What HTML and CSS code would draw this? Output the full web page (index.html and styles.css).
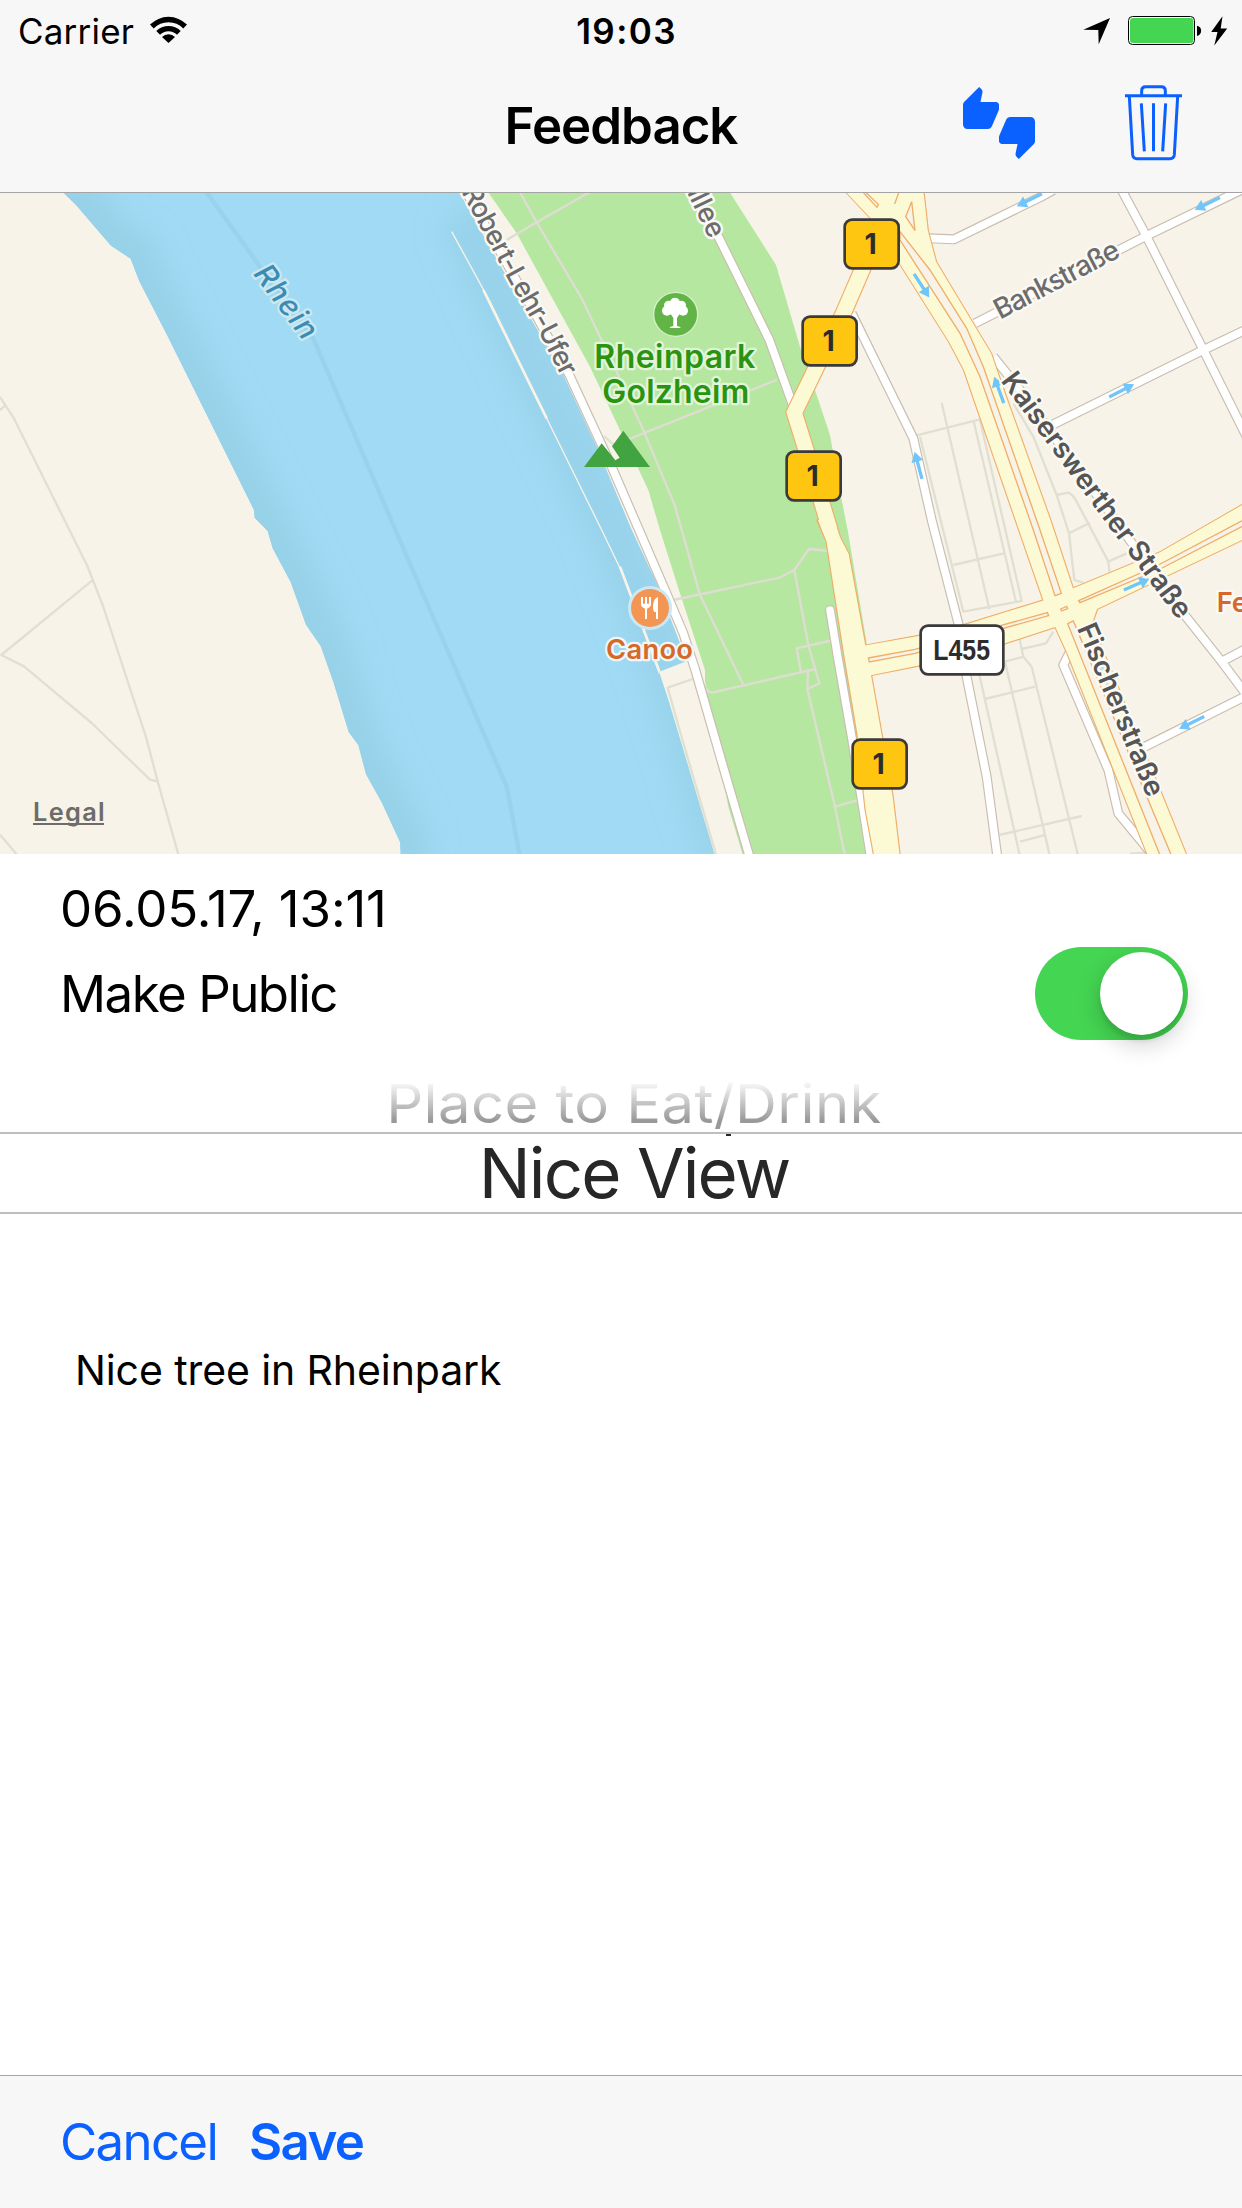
FILE: index.html
```html
<!DOCTYPE html>
<html lang="en">
<head>
<meta charset="utf-8">
<title>Feedback</title>
<link rel="stylesheet" href="styles.css">
</head>
<body>
<div class="screen">
  <header class="top">
    <div class="status">
      <div class="status-left">
        <span class="carrier">Carrier</span>
        <svg class="wifi" viewBox="0 0 37 27" width="37" height="27">
          <path d="M0 8.6A26 26 0 0 1 37 8.6L33.3 12.4A20.8 20.8 0 0 0 3.7 12.4Z"/>
          <path d="M6.3 15A17.2 17.2 0 0 1 30.7 15L27 18.7A12 12 0 0 0 10 18.7Z"/>
          <path d="M12 21A9 9 0 0 1 25 21L18.500 27Z"/>
        </svg>
      </div>
      <span class="clock">19:03</span>
      <div class="status-right">
        <svg class="locate" viewBox="1083 17 28 28" width="28" height="28"><path d="M1083.300 29.700L1110 18L1098.700 44.300L1098.300 30Z"/></svg>
        <svg class="battery" viewBox="1128 16 74 29" width="74" height="29">
          <rect x="1128.500" y="16.500" width="66" height="28" rx="4" fill="#fff" stroke="#000"/>
          <rect x="1130" y="18" width="63.500" height="25" rx="3" fill="#44d552"/>
          <path d="M1197 25.700C1202.500 26.500 1202.500 35 1197 36Z"/>
        </svg>
        <svg class="bolt" viewBox="1211 15 17 30" width="17" height="30"><path d="M1222.500 15.300L1211.200 31H1217.500L1214.300 44.400L1227.200 27.600H1220.700Z"/></svg>
      </div>
    </div>
    <div class="nav">
      <h1 class="title">Feedback</h1>
      <div class="actions">
        <svg class="thumbs" viewBox="0 0 24 24" width="72" height="72"><path d="M12 6c0-.55-.45-1-1-1H5.820l.66-3.180.02-.23c0-.31-.13-.59-.33-.8L5.380 0 .44 4.940C.17 5.210 0 5.590 0 6v6.500c0 .83.67 1.500 1.500 1.500h6.750c.62 0 1.150-.38 1.380-.91l2.260-5.290c.07-.17.11-.36.11-.55V6zm10.500 4h-6.750c-.62 0-1.150.38-1.380.91l-2.260 5.290c-.07.17-.11.36-.11.55V18c0 .55.45 1 1 1h5.180l-.66 3.180-.02.24c0 .31.13.59.33.8l.79.78 4.940-4.940c.27-.27.44-.65.44-1.060v-6.500c0-.83-.67-1.500-1.500-1.500z"/></svg>
        <svg class="trash" viewBox="675 254 171 228" width="57" height="76">
          <path d="M675 286H846M725 286V271Q725 259 737 259H784Q796 259 796 271V286M688 288L698 463Q699 475 711 475H810Q822 475 823 463L833 288M724 309L733 453M760.500 309V453M797 309L788 453"/>
        </svg>
      </div>
    </div>
  </header>

  <svg class="map" viewBox="0 9 3726 1983" width="1242" height="661">
    <defs>
      <path id="water" d="M190 8L228 45L333 167L392 206L418 274L500 433L600 634L762 960L764 983L803 1023L818 1075L872 1176L918 1304L962 1368L1000 1475L1046 1626L1075 1665L1098 1753L1145 1837L1200 1956L1203 2010H2148L2143 1991L2050 1680L2005 1530L1977 1445L2055 1415L2040 1360L1970 1180L1895 1020L1790 770L1690 555L1500 225L1378 8Z"/>
      <clipPath id="shore"><use href="#water"/></clipPath>
      <filter id="soft" x="-20%" y="-20%" width="140%" height="140%"><feGaussianBlur stdDeviation="42"/></filter>
      <path id="arrow" d="M-42 -5H12V-18L42 0L12 18V5H-42Z"/>
      <path id="ufer" d="M1384 5L1528 275L1621 435L1690 572"/>
      <path id="allee" d="M2036 -50L2064 14L2129 149"/>
    </defs>
    <rect y="0" width="3726" height="2000" fill="#f7f3e8"/>
    <use href="#water" fill="#a0daf4"/>
    <g clip-path="url(#shore)" fill="none">
      <g stroke="#96d1e8" filter="url(#soft)">
        <path stroke-width="170" d="M150 -40L228 45L333 167L392 206L418 274L600 634L762 960L818 1075L872 1176L962 1368L1046 1626L1098 1753L1200 1956L1210 2040"/>
        <path stroke-width="110" stroke-opacity=".8" d="M1370 90L1480 335L1650 685L1815 1020L1987 1445L2060 1680L2160 2020"/>
        <path stroke-width="90" stroke-opacity=".6" d="M1390 30L1690 555L1895 1020L2055 1400"/>
      </g>
      <path stroke="#98d2ec" stroke-width="13" d="M615 0L780 230L940 446L1225 1110L1520 1790L1560 2000"/>
      <path stroke="#f7f3e8" stroke-width="4" d="M1355 125L1470 335L1640 685L1805 1020L1870 1155L1977 1445"/>
      <path stroke="#f7f3e8" stroke-width="8" d="M1860 1130L1980 1450M1450 300L1640 685"/>
    </g>
    <path fill="#b6e7a0" d="M1460 0L1550 130L1770 530L1945 900L1980 1020L2035 1195L2115 1440L2115 1475L2185 1850L2230 2000H2610L2600 1360L2543 1020L2525 930L2490 735L2445 600L2400 470L2328 225L2185 0Z"/>

    <g class="path">
      <path d="M0 621L40 682L262 1128L308 1245L438 1641L473 1774L540 2011M277 1171L4 1395L72 1429L275 1599L450 1769L473 1774M0 660L15 647M0 1934L50 1993"/>
      <path d="M2078 1467L2003 1493L2040 1625L2150 2000M1812 738L1845 768"/>
    </g>
    <g class="path parkway">
      <path d="M1556 0L1610 97L1745 325L1850 545L1934 730L2022 940L2045 1020L2100 1215L2230 1485M1780 0L1610 97L1520 150M1885 748L2330 570"/>
      <path d="M2020 1230L2338 1163L2383 1140L2427 1077L2490 1083M2383 1140L2425 1365L2458 1480L2422 1497L2424 1445M2422 1497L2505 1850L2535 2000M2505 1850L2590 1826M2115 1490Q2125 1512 2145 1506L2445 1437M2403 1445L2390 1375L2500 1350"/>
    </g>
    <g class="path" transform="translate(2400 0)">
      <path d="M350 736L540 688M425 638L568 1258M360 740L490 1265L665 1233L540 690M520 690L648 1235M460 1125L612 1090M640 640L700 740L770 915L807 1030L823 1170L850 1178M770 915L805 908Q820 915 830 935L925 1115L928 1145M807 1030L870 998M925 1115L980 1090"/>
      <path d="M535 1440L660 2000M615 1415L750 2000M655 1330L670 1400L695 1430L835 2000M555 1527L705 1490M615 1415L670 1400M665 1377L738 1360L760 1325M598 1935L845 1878M660 1955L735 1935M990 1991L1040 1987"/>
    </g>

    <g class="road-edge">
      <path d="M1395 0L1540 255L1708 555L1835 830L1917 1020L1995 1200L2050 1330L2086 1440L2168 1725L2250 2005"/>
      <path d="M2082 0L2160 150L2308 450L2382 655"/>
      <path d="M2555 370L2740 745L2795 990L2875 1300L2900 1460L2960 1760L2992 2000"/>
      <path d="M2785 145L2862 148L3120 22L3160 0M2925 400L3435 140L3740 -8M3365 0L3440 140L3610 480L3740 740M3150 708L3610 480L3740 418"/>
      <path d="M2980 500L3060 600L3550 1270L3665 1415L3740 1515M3665 1415L3740 1375M3425 1675L3740 1517"/>
      <path d="M3210 1385L3190 1425L3325 1740L3355 1870L3450 1985"/>
      <path d="M2490 1260L2513 1400L2555 1640L2590 1860L2612 2000" stroke-linecap="round"/>
    </g>
    <g class="road-fill">
      <path d="M1395 0L1540 255L1708 555L1835 830L1917 1020L1995 1200L2050 1330L2086 1440L2168 1725L2250 2005"/>
      <path d="M2082 0L2160 150L2308 450L2382 655"/>
      <path d="M2555 370L2740 745L2795 990L2875 1300L2900 1460L2960 1760L2992 2000"/>
      <path d="M2785 145L2862 148L3120 22L3160 0M2925 400L3435 140L3740 -8M3365 0L3440 140L3610 480L3740 740M3150 708L3610 480L3740 418"/>
      <path d="M2980 500L3060 600L3550 1270L3665 1415L3740 1515M3665 1415L3740 1375M3425 1675L3740 1517"/>
      <path d="M3210 1385L3190 1425L3325 1740L3355 1870L3450 1985"/>
      <path d="M2490 1260L2513 1400L2555 1640L2590 1860L2612 2000" stroke-linecap="round"/>
    </g>

    <g class="main-edge">
      <path d="M2690 0L2530 370L2450 530L2383 668L2418 780L2490 1020" class="wide"/>
      <path d="M2450 990L2478 1055L2530 1390L2570 1630L2595 1860L2622 2005H2702L2680 1820L2648 1640L2615 1455L2597 1362L2548 1092L2522 1042L2506 990Z"/>
      <path d="M2597 1365L2760 1335L2895 1302L3128 1230L3220 1193L3480 1085L3740 935V1045L3293 1258L3280 1295L3165 1313L3015 1362L2760 1428L2612 1457Z"/>
      <path d="M2530 0L2610 85L2700 225L2845 455L2890 540L2945 700L3045 990L3128 1230L3165 1313L3200 1390L3445 2005H3565L3490 1820L3273 1290L3220 1193L3153 990L3020 620L2975 490L2810 215L2785 120L2772 0Z"/>
    </g>
    <g class="main-fill">
      <path d="M2690 0L2530 370L2450 530L2383 668L2418 780L2490 1020" class="wide"/>
      <path d="M2454 990L2480 1055L2532 1390L2572 1630L2597 1860L2624 2005H2700L2678 1820L2646 1640L2613 1455L2595 1362L2546 1092L2520 1042L2503 990Z"/>
      <path d="M2590 1367L2760 1337L2895 1304L3128 1232L3220 1195L3480 1087L3740 937V1043L3291 1257L3278 1295L3165 1311L3015 1360L2760 1426L2605 1457Z"/>
      <path d="M2532 0L2612 85L2702 225L2847 455L2892 540L2947 700L3047 990L3130 1230L3167 1313L3202 1390L3447 2005H3563L3488 1820L3271 1290L3218 1193L3151 990L3018 620L2973 490L2808 215L2783 120L2770 0Z"/>
    </g>
    <g class="median" transform="translate(2400 0)">
      <path d="M300 125L390 240L500 415L550 530L720 1020L784 1210L765 1217L700 1020L540 560L480 430L300 150Z"/>
      <path d="M803 1301L820 1293L1117 2003H1083Z"/>
      <path d="M205 1404L345 1378L742 1268L746 1277L345 1390L208 1416Z"/>
      <path d="M836 1232L1075 1125L1340 985V1002L1075 1140L840 1238Z"/>
      <path d="M782 1257L800 1249L803 1256L785 1263Z"/>
      <path d="M335 35L317 80L345 122Z"/>
      <path d="M190 0L235 43L231 52L183 0ZM299 0L284 42"/>
    </g>

    <g class="arrows" transform="translate(2400 0)">
      <use href="#arrow" transform="translate(688 30) rotate(153.700)"/>
      <use href="#arrow" transform="translate(1222 41) rotate(153.700)"/>
      <use href="#arrow" transform="translate(365 287) rotate(57)"/>
      <use href="#arrow" transform="translate(597 600) rotate(-110)"/>
      <use href="#arrow" transform="translate(965 602) rotate(-27)"/>
      <use href="#arrow" transform="translate(355 826) rotate(-105)"/>
      <use href="#arrow" transform="translate(1010 1183) rotate(-24)"/>
      <use href="#arrow" transform="translate(1175 1598) rotate(154)"/>
      <use href="#arrow" transform="translate(910 1455) rotate(-113)" opacity=".45"/>
    </g>

    <path fill="#41a441" d="M1752 831L1805 760L1846 811L1859 803L1836 769L1870 722L1950 831Z"/>
    <circle cx="2027" cy="373" r="66" fill="#62b446" stroke="#d3f0c8" stroke-width="4"/>
    <g fill="#fff" transform="translate(1200 0)">
      <circle cx="801" cy="362" r="15"/><circle cx="806" cy="346" r="14"/><circle cx="825" cy="338" r="15"/><circle cx="844" cy="346" r="14"/><circle cx="849" cy="362" r="15"/><circle cx="825" cy="358" r="20"/>
      <path d="M811 370L820 384V408L810 411V414H841V411L831 408V384L840 370Z"/>
    </g>
    <circle cx="1950" cy="1254" r="66" fill="#cbe8f5"/>
    <circle cx="1950" cy="1254" r="57" fill="#f39553"/>
    <path fill="#fff" d="M1923 1221H1929V1241H1935V1221H1941V1241H1947V1221H1953V1243Q1953 1252 1941 1256V1287H1935V1256Q1923 1252 1923 1243ZM1974 1221V1287H1968V1266H1964Q1959 1263 1959 1250Q1959 1226 1974 1221Z"/>

    <g class="shields">
      <rect x="2534" y="89" width="162" height="146" rx="22"/>
      <rect x="2408" y="380" width="162" height="146" rx="22"/>
      <rect x="2360" y="785" width="162" height="146" rx="22"/>
      <rect x="2558" y="1649" width="162" height="146" rx="22"/>
      <rect x="2762" y="1307" width="248" height="146" rx="22" class="plain"/>
      <text x="2612" y="192">1</text>
      <text x="2486" y="483">1</text>
      <text x="2438" y="888">1</text>
      <text x="2636" y="1752">1</text>
      <text x="2885" y="1410" class="plate" textLength="170" lengthAdjust="spacingAndGlyphs">L455</text>
    </g>

    <g class="labels">
      <text class="river" transform="translate(758 252) rotate(53)" font-size="90" textLength="254">Rhein</text>
      <text class="street" font-size="82"><textPath href="#ufer" textLength="634">Robert-Lehr-Ufer</textPath></text>
      <text class="street" font-size="82"><textPath href="#allee" startOffset="100%" text-anchor="end">allee</textPath></text>
      <text class="street" transform="translate(3000 389) rotate(-27.500)" font-size="84" textLength="412">Bankstraße</text>
      <text class="avenue" transform="translate(3001 572) rotate(53.400)" font-size="84" textLength="896">Kaiserswerther Straße</text>
      <text class="avenue" transform="translate(3230 1314) rotate(67.400)" font-size="84" textLength="554">Fischerstraße</text>
      <text class="park" x="1783" y="535" font-size="96" textLength="483">Rheinpark</text>
      <text class="park" x="1807" y="638" font-size="96" textLength="441">Golzheim</text>
      <text class="food" x="1818" y="1408" font-size="82" textLength="261">Canoo</text>
      <text class="food inland" x="3650" y="1265" font-size="82">Fe</text>
      <text class="legal" x="99" y="1892" font-size="76" textLength="215">Legal</text>
      <path d="M99 1902H312" stroke="#6e6c68" stroke-width="6"/>
    </g>
  </svg>

  <main class="form">
    <div class="date">06.05.17, 13:11</div>
    <div class="row">
      <span class="row-label">Make Public</span>
      <span class="switch"><span class="knob"></span></span>
    </div>
    <div class="picker">
      <div class="option faded"><span class="faded-text">Place to Eat/Drink</span></div>
      <div class="option selected"><span class="selected-text">Nice View</span></div>
    </div>
    <div class="note">Nice tree in Rheinpark</div>
  </main>

  <footer class="toolbar">
    <span class="cancel">Cancel</span>
    <span class="save">Save</span>
  </footer>
</div>
</body>
</html>
```
FILE: styles.css
```css
* { box-sizing: border-box; }

body {
  margin: 0;
  background: #fff;
  color: #000;
  font-family: Inter, "Liberation Sans", sans-serif;
}

.screen {
  width: 1242px;
  height: 2208px;
  display: flex;
  flex-direction: column;
  overflow: hidden;
}

.top {
  height: 193px;
  flex: none;
  background: #f7f7f7;
  border-bottom: 1px solid #a3a4a3;
}

.status {
  height: 60px;
  display: grid;
  grid-template-columns: 1fr auto 1fr;
  align-items: center;
  padding: 1px 14px 0 18px;
  font-size: 35px;
}

.status-left, .status-right { display: flex; align-items: center; }
.status-left { gap: 16px; }
.status-right { justify-content: flex-end; gap: 9px; }
.carrier { letter-spacing: 0.2px; }
.wifi { margin-top: -3px; }
.locate { margin-right: 8px; }
.clock { font-weight: 600; letter-spacing: 1.4px; padding-left: 7px; }

.nav {
  height: 132px;
  display: grid;
  grid-template-columns: 1fr auto 1fr;
  align-items: center;
}

.title {
  grid-column: 2;
  margin: 0;
  font-size: 51px;
  font-weight: 600;
  letter-spacing: -1px;
  line-height: 60px;
}

.actions {
  display: flex;
  justify-content: flex-end;
  align-items: center;
  gap: 90px;
  padding: 0 60px 7px 0;
}

.thumbs { fill: #0b61ff; }
.trash { fill: none; stroke: #0b61ff; stroke-width: 9; }

.map { display: block; flex: none; }
.path { fill: none; stroke: #e0e0d2; stroke-width: 7; stroke-linejoin: round; }
.parkway { stroke: #deddd2; }
.road-edge { fill: none; stroke: #c9beb1; stroke-width: 30; stroke-linejoin: round; }
.road-fill { fill: none; stroke: #fff; stroke-width: 23; stroke-linejoin: round; }
.main-edge { fill: #f0ae68; stroke: #f0ae68; stroke-width: 3; }
.main-edge .wide { fill: none; stroke-width: 52; }
.main-fill { fill: #fcfad5; }
.main-fill .wide { fill: none; stroke: #fcfad5; stroke-width: 45; }
.median { fill: #f7f3e8; stroke: #f0ae68; stroke-width: 4; }
.arrows { fill: #70c5fb; }

.shields rect { fill: #fec610; stroke: #3a3a3a; stroke-width: 8; }
.shields .plain { fill: #fff; }
.shields text {
  font-size: 85px;
  font-weight: 700;
  fill: #2c2c2c;
  text-anchor: middle;
}
.shields .plate { font-family: "Liberation Sans", sans-serif; font-size: 90px; }

.labels text { paint-order: stroke; stroke-width: 14; stroke-linejoin: round; stroke: #fbf9f4; font-weight: 500; }
.labels .river { fill: #3b8cb5; stroke: #cbe8f0; font-style: italic; }
.labels .street { fill: #6d6c6d; }
.labels .avenue { fill: #555; font-weight: 600; }
.labels .park { fill: #2a9410; stroke: #e2f5da; font-weight: 600; }
.labels .food { fill: #d6692a; stroke: #f0f7f8; font-weight: 600; }
.labels .inland { stroke: #fbf9f4; }
.labels .legal { fill: #6e6c68; stroke: none; font-weight: 600; }

.form {
  flex: 1;
  display: flex;
  flex-direction: column;
}

.date {
  height: 86px;
  padding: 25px 0 0 60px;
  font-size: 51px;
  line-height: 60px;
  letter-spacing: -0.1px;
}

.row {
  display: flex;
  align-items: center;
  justify-content: space-between;
  height: 107px;
  padding: 0 54px 0 60px;
}

.row-label { font-size: 51px; line-height: 60px; letter-spacing: -1.5px; }

.switch {
  width: 153px;
  height: 93px;
  padding: 5px;
  border-radius: 47px;
  background: #44d552;
  display: flex;
  justify-content: flex-end;
}

.knob {
  width: 83px;
  height: 83px;
  border-radius: 50%;
  background: #fff;
  box-shadow: 0 9px 24px rgba(0, 0, 0, 0.2), 0 6px 4px rgba(0, 0, 0, 0.08);
}

.picker { height: 167px; text-align: center; }

.option { display: flex; justify-content: center; padding-left: 26px; }

.faded {
  height: 87px;
  align-items: flex-end;
  border-bottom: 2px solid #bebebe;
}

.faded-text {
  font-size: 58px;
  line-height: 62px;
  letter-spacing: 0.4px;
  transform: scaleY(0.93);
  transform-origin: bottom;
  background: linear-gradient(#fff 8%, #eee 22%, #999 80%);
  -webkit-background-clip: text;
  background-clip: text;
  color: transparent;
}

.selected {
  height: 80px;
  align-items: center;
  border-bottom: 2px solid #bebebe;
  background: linear-gradient(#272727, #272727) 726px 0 / 5px 2px no-repeat;
}

.selected-text {
  font-size: 69px;
  line-height: 78px;
  letter-spacing: -1.9px;
  color: #272727;
}

.note {
  padding: 131px 0 0 75px;
  font-size: 41px;
  line-height: 50px;
  letter-spacing: -0.1px;
}

.toolbar {
  height: 133px;
  flex: none;
  display: flex;
  align-items: center;
  gap: 32px;
  padding: 0 60px 1px;
  background: #f7f7f7;
  border-top: 1px solid #a3a4a3;
  color: #0b61ff;
  font-size: 51px;
}

.cancel { letter-spacing: -1.7px; }
.save { font-weight: 600; letter-spacing: -1.6px; }
```
